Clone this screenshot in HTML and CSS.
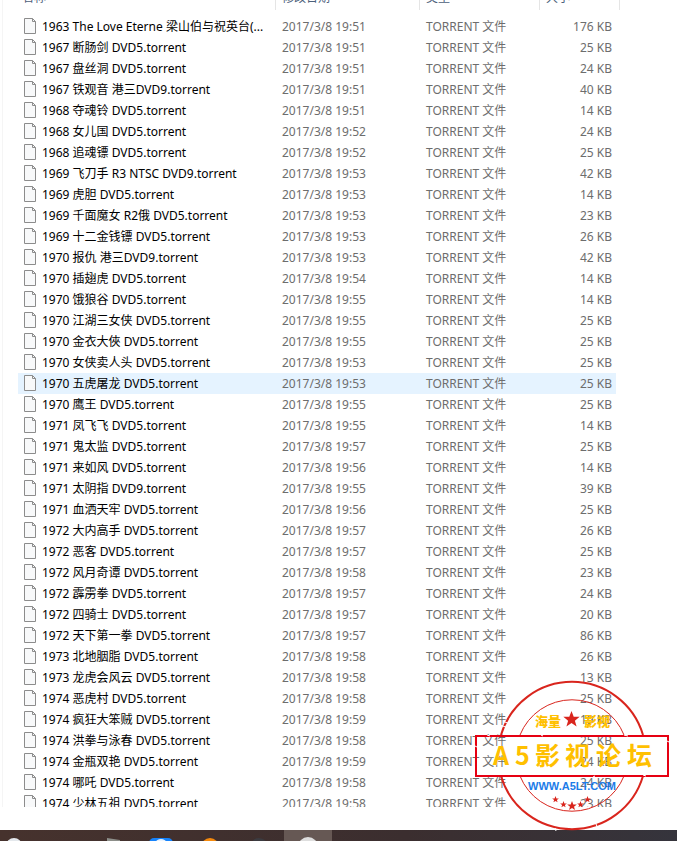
FILE: index.html
```html
<!DOCTYPE html>
<html lang="zh-CN">
<head>
    <meta charset="UTF-8">
    <meta name="viewport" content="width=device-width, initial-scale=1.0">
    <title>Torrents</title>
    <link rel="stylesheet" href="styles.css">
</head>
<body>
    <svg class="defs" aria-hidden="true">
        <symbol id="file" viewBox="0 0 12 16">
            <path d="M.5.5h8l3 3v12H.5z" fill="#f8f9fa" stroke="#8c8c8c"/>
            <path d="M8.5.5v3h3" fill="none" stroke="#8c8c8c"/>
        </symbol>
        <symbol id="star" viewBox="-10 -10 20 20">
            <path d="M0-10 2.6-3.2 9.6-3.1 4 1.4 6 8.2 0 4.2-6 8.2-4 1.4-9.6-3.1-2.6-3.2z"/>
        </symbol>
    </svg>

    <main class="file-list">
        <table>
            <colgroup>
                <col class="col-name">
                <col class="col-date">
                <col class="col-type">
                <col class="col-size">
                <col class="col-end">
            </colgroup>
            <thead>
                <tr>
                    <th>名称</th>
                    <th>修改日期</th>
                    <th>类型</th>
                    <th colspan="2">大小</th>
                </tr>
            </thead>
            <tbody id="files"></tbody>
        </table>
    </main>

    <footer class="taskbar">
        <svg class="task-icons" width="340" height="11" viewBox="0 0 340 11" aria-hidden="true">
            <circle cx="14" cy="16" r="8" fill="#e4e8ec"/>
            <path d="M107 8l13 2v1h-13z" fill="#8d8f8a"/>
            <rect x="149" y="8" width="24" height="12" rx="5" fill="#1683fb"/>
            <ellipse cx="161" cy="12" rx="5" ry="3" fill="#e8f3ff"/>
            <circle cx="210" cy="17" r="9" fill="#f68a0c"/>
            <circle cx="259" cy="17" r="9" fill="#3c3b40"/>
            <rect x="284" width="48" height="11" fill="#665854"/>
            <circle cx="308" cy="17" r="10" fill="#dedede"/>
        </svg>
    </footer>

    <div class="stamp">
        <svg width="194" height="152" viewBox="0 0 194 152" aria-label="A5影视论坛">
            <g fill="none" stroke="#d9251d">
                <path d="M26 55A74 74 0 0 1 168 55M26 96A74 74 0 0 0 168 96" stroke-width="2"/>
                <path d="M45 55A56 56 0 0 1 149 55M45 96A56 56 0 0 0 149 96"/>
                <rect x="1" y="56" width="192" height="40" stroke="#e60012" stroke-width="2"/>
            </g>
            <!-- worn spots in the ink -->
            <path d="M28 46l5 2M30 42l5 2M121 144l2 5M80 148l1 3M12 55l3 1M66 55l2 1M118 97l2-1M149 55l4 1M168 95l3 1M0 66l2 1M192 61l2 1" stroke="#fff" fill="none"/>
            <g fill="#d9251d">
                <use href="#star" x="88" y="31" width="17" height="17"/>
                <use href="#star" x="77" y="116" width="7" height="7"/>
                <use href="#star" x="85" y="121" width="7" height="7"/>
                <use href="#star" x="92" y="121" width="10" height="10"/>
                <use href="#star" x="102" y="121" width="7" height="7"/>
                <use href="#star" x="109" y="116" width="7" height="7"/>
            </g>
            <g class="stamp-small">
                <text x="60" y="46">海量</text>
                <text x="109" y="46">影视</text>
            </g>
            <g class="stamp-big">
                <text x="18" y="85">A</text>
                <text x="40" y="85">5</text>
                <text x="60" y="85">影</text>
                <text x="90" y="85">视</text>
                <text x="121" y="85">论</text>
                <text x="152" y="85">坛</text>
            </g>
            <text class="stamp-url" x="97" y="110">WWW.A5LT.COM</text>
        </svg>
    </div>

    <script>
        // [name, time, size in KB]
        const files = [
            ['1963 The Love Eterne 梁山伯与祝英台(...', '19:51', 176],
            ['1967 断肠剑 DVD5.torrent', '19:51', 25],
            ['1967 盘丝洞 DVD5.torrent', '19:51', 24],
            ['1967 铁观音 港三DVD9.torrent', '19:51', 40],
            ['1968 夺魂铃 DVD5.torrent', '19:51', 14],
            ['1968 女儿国 DVD5.torrent', '19:52', 24],
            ['1968 追魂镖 DVD5.torrent', '19:52', 25],
            ['1969 飞刀手 R3 NTSC DVD9.torrent', '19:53', 42],
            ['1969 虎胆 DVD5.torrent', '19:53', 14],
            ['1969 千面魔女 R2俄 DVD5.torrent', '19:53', 23],
            ['1969 十二金钱镖 DVD5.torrent', '19:53', 26],
            ['1970 报仇 港三DVD9.torrent', '19:53', 42],
            ['1970 插翅虎 DVD5.torrent', '19:54', 14],
            ['1970 饿狼谷 DVD5.torrent', '19:55', 14],
            ['1970 江湖三女侠 DVD5.torrent', '19:55', 25],
            ['1970 金衣大俠 DVD5.torrent', '19:55', 25],
            ['1970 女侠卖人头 DVD5.torrent', '19:53', 25],
            ['1970 五虎屠龙 DVD5.torrent', '19:53', 25],
            ['1970 鹰王 DVD5.torrent', '19:55', 25],
            ['1971 凤飞飞 DVD5.torrent', '19:55', 14],
            ['1971 鬼太监 DVD5.torrent', '19:57', 25],
            ['1971 来如风 DVD5.torrent', '19:56', 14],
            ['1971 太阴指 DVD9.torrent', '19:55', 39],
            ['1971 血洒天牢 DVD5.torrent', '19:56', 25],
            ['1972 大内高手 DVD5.torrent', '19:57', 26],
            ['1972 恶客 DVD5.torrent', '19:57', 25],
            ['1972 风月奇谭 DVD5.torrent', '19:58', 23],
            ['1972 霹雳拳 DVD5.torrent', '19:57', 24],
            ['1972 四骑士 DVD5.torrent', '19:57', 20],
            ['1972 天下第一拳 DVD5.torrent', '19:57', 86],
            ['1973 北地胭脂 DVD5.torrent', '19:58', 26],
            ['1973 龙虎会风云 DVD5.torrent', '19:58', 13],
            ['1974 恶虎村 DVD5.torrent', '19:58', 25],
            ['1974 疯狂大笨贼 DVD5.torrent', '19:59', 19],
            ['1974 洪拳与泳春 DVD5.torrent', '19:58', 25],
            ['1974 金瓶双艳 DVD5.torrent', '19:59', 24],
            ['1974 哪吒 DVD5.torrent', '19:58', 24],
            ['1974 少林五祖 DVD5.torrent', '19:58', 23]
        ];
        const hovered = 17;

        document.getElementById('files').innerHTML = files.map(([name, time, size], i) => `
            <tr${i === hovered ? ' class="hovered"' : ''}>
                <td class="name"><svg class="icon" width="12" height="16"><use href="#file"/></svg>${name}</td>
                <td>2017/3/8 ${time}</td>
                <td>TORRENT 文件</td>
                <td class="size">${size} KB</td>
                <td></td>
            </tr>`).join('');
    </script>
</body>
</html>
```
FILE: styles.css
```css
body {
    display: flex;
    flex-direction: column;
    height: 100vh;
    margin: 0;
    overflow: hidden;
    background: #fff;
    color: #6d6d6d;
    font-family: "Noto Sans", "Noto Sans CJK SC", sans-serif;
    font-size: 12px;
}
.defs {
    display: none;
}
.file-list {
    flex: 1;
    min-height: 0;
    margin: 0 0 23px 2px;
    padding-left: 15px;
    border-left: 1px solid #f5f5f5;
    overflow: hidden;
}
table {
    width: 602px;
    margin-top: -14px;
    table-layout: fixed;
    border-collapse: separate;
    border-spacing: 0;
}
.col-name {
    width: 258px;
}
.col-date {
    width: 144px;
}
.col-type {
    width: 120px;
}
.col-size {
    width: 76px;
}
.col-end {
    width: 4px;
}
th {
    height: 24px;
    box-sizing: border-box;
    padding: 0 6px;
    border-right: 1px solid #e5e5e5;
    color: #4c607a;
    font-weight: normal;
    line-height: 24px;
    text-align: left;
}
th:first-child {
    padding-left: 4px;
}
tbody::before {
    content: "";
    display: block;
    height: 6px;
}
td {
    height: 21px;
    padding: 0 4px 0 6px;
    line-height: 21px;
    white-space: nowrap;
}
td:last-child {
    padding: 0;
}
td.name {
    color: #000;
    overflow: hidden;
    text-overflow: ellipsis;
}
td.size {
    text-align: right;
}
.icon {
    margin-right: 6px;
    vertical-align: -3px;
}
.hovered td:not(:last-child) {
    background: #e5f3ff;
}
.taskbar {
    height: 11px;
    background: linear-gradient(90deg, #46322d, #3b2e2f 60%, #35343c);
}
.task-icons {
    display: block;
}

/* watermark over the list */
.stamp {
    position: absolute;
    right: 8px;
    bottom: 9px;
    pointer-events: none;
}
.stamp svg {
    display: block;
}
.stamp text {
    font-family: "Noto Sans CJK SC", sans-serif;
    font-weight: bold;
    fill: #ffc000;
}
.stamp-small text {
    font-size: 13px;
    font-weight: 900;
}
.stamp-big text {
    font-size: 25px;
}
.stamp .stamp-url {
    font-family: "Liberation Sans", Arial, sans-serif;
    font-size: 11px;
    fill: #1c7ce8;
    text-anchor: middle;
}
```
